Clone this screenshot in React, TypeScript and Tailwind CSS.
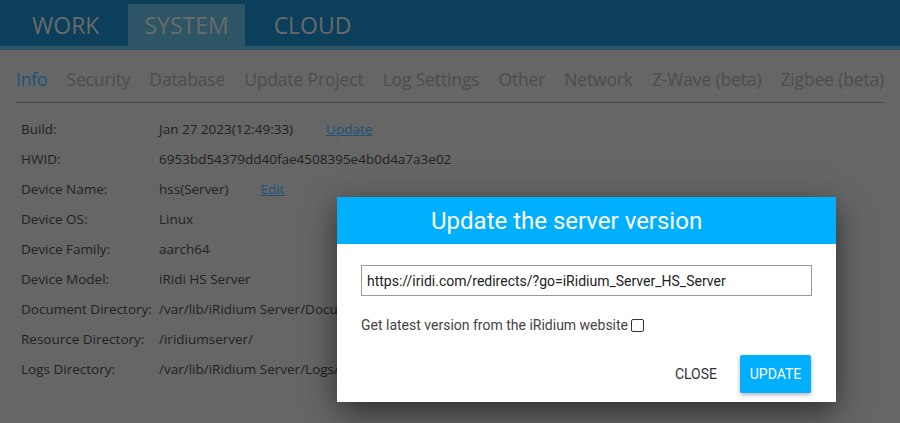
import { useState } from 'react'

const mainTabs = ['WORK', 'SYSTEM', 'CLOUD']
const subTabs = ['Info', 'Security', 'Database', 'Update Project', 'Log Settings', 'Other', 'Network', 'Z-Wave (beta)', 'Zigbee (beta)']

const rows: { label: string; value: string; link?: string; linkGap?: string }[] = [
  { label: 'Build:', value: 'Jan 27 2023(12:49:33)', link: 'Update', linkGap: 'ml-[33px]' },
  { label: 'HWID:', value: '6953bd54379dd40fae4508395e4b0d4a7a3e02' },
  { label: 'Device Name:', value: 'hss(Server)', link: 'Edit', linkGap: 'ml-[32px]' },
  { label: 'Device OS:', value: 'Linux' },
  { label: 'Device Family:', value: 'aarch64' },
  { label: 'Device Model:', value: 'iRidi HS Server' },
  { label: 'Document Directory:', value: '/var/lib/iRidium Server/Documents/' },
  { label: 'Resource Directory:', value: '/iridiumserver/' },
  { label: 'Logs Directory:', value: '/var/lib/iRidium Server/Logs/' },
]

function UpdateDialog() {
  const [url, setUrl] = useState('https://iridi.com/redirects/?go=iRidium_Server_HS_Server')
  const [latest, setLatest] = useState(false)

  return (
    <div className="absolute left-[337px] top-[197px] w-[499px] bg-white shadow-[0_10px_30px_rgba(0,0,0,0.55)] font-['Roboto',sans-serif]">
      <div className="flex h-[47px] items-center bg-[#00b0ff] pl-[94px] text-[24px] text-white">
        Update the server version
      </div>
      <div className="px-6 pt-[21px]">
        <input
          value={url}
          onChange={(e) => setUrl(e.target.value)}
          className="h-[31px] w-full border border-[#999] px-[5px] text-[14px] text-[#222] outline-none"
        />
        <label className="mt-[19px] flex items-center text-[14px] text-[#444]">
          Get latest version from the iRidium website
          <input
            type="checkbox"
            checked={latest}
            onChange={(e) => setLatest(e.target.checked)}
            className="ml-[3px] h-[13px] w-[13px] appearance-none rounded-[2px] border border-[#333] bg-white"
          />
        </label>
      </div>
      <div className="flex items-center justify-end gap-[23px] px-[25px] pb-[9px] pt-[19px]">
        <button type="button" className="text-[14px] text-[#333]">
          CLOSE
        </button>
        <button
          type="button"
          className="h-[38px] w-[71px] rounded-[2px] bg-[#00b0ff] text-[14px] text-white shadow-[0_2px_4px_rgba(0,0,0,0.3)]"
        >
          UPDATE
        </button>
      </div>
    </div>
  )
}

export default function App() {
  return (
    <div className="relative h-[423px] w-[900px] overflow-hidden bg-[#666666] font-['Open_Sans',sans-serif]">
      <div className="flex h-[46px] items-end gap-[13px] bg-[#0b3f5c] pl-[16px]">
        {mainTabs.map((t) => (
          <div
            key={t}
            className={`flex h-[42px] items-center justify-center px-[16px] text-[23px] text-[#6a6a6a] ${
              t === 'SYSTEM' ? 'bg-[#2d5566]' : ''
            }`}
          >
            {t}
          </div>
        ))}
      </div>
      <div className="h-[4px] bg-[#2d5566]" />

      <div className="mx-[16px] flex h-[53px] items-center gap-[19px] overflow-hidden whitespace-nowrap border-b border-[#4a4a4a] pt-[6px] text-[17.5px] tracking-[-0.15px] text-[#4d4d4d]">
        {subTabs.map((t) => (
          <span key={t} className={`shrink-0 ${t === 'Info' ? 'text-[#1b547d]' : ''}`}>
            {t}
          </span>
        ))}
      </div>

      <div className="pl-[21px] pt-[11px] text-[13.5px] text-[#222]">
        {rows.map((r) => (
          <div key={r.label} className="flex h-[30px] items-center">
            <span className="w-[138px] shrink-0">{r.label}</span>
            <span className="whitespace-nowrap">{r.value}</span>
            {r.link && <a className={`${r.linkGap} text-[#1b547d] underline`}>{r.link}</a>}
          </div>
        ))}
      </div>

      <UpdateDialog />
    </div>
  )
}
